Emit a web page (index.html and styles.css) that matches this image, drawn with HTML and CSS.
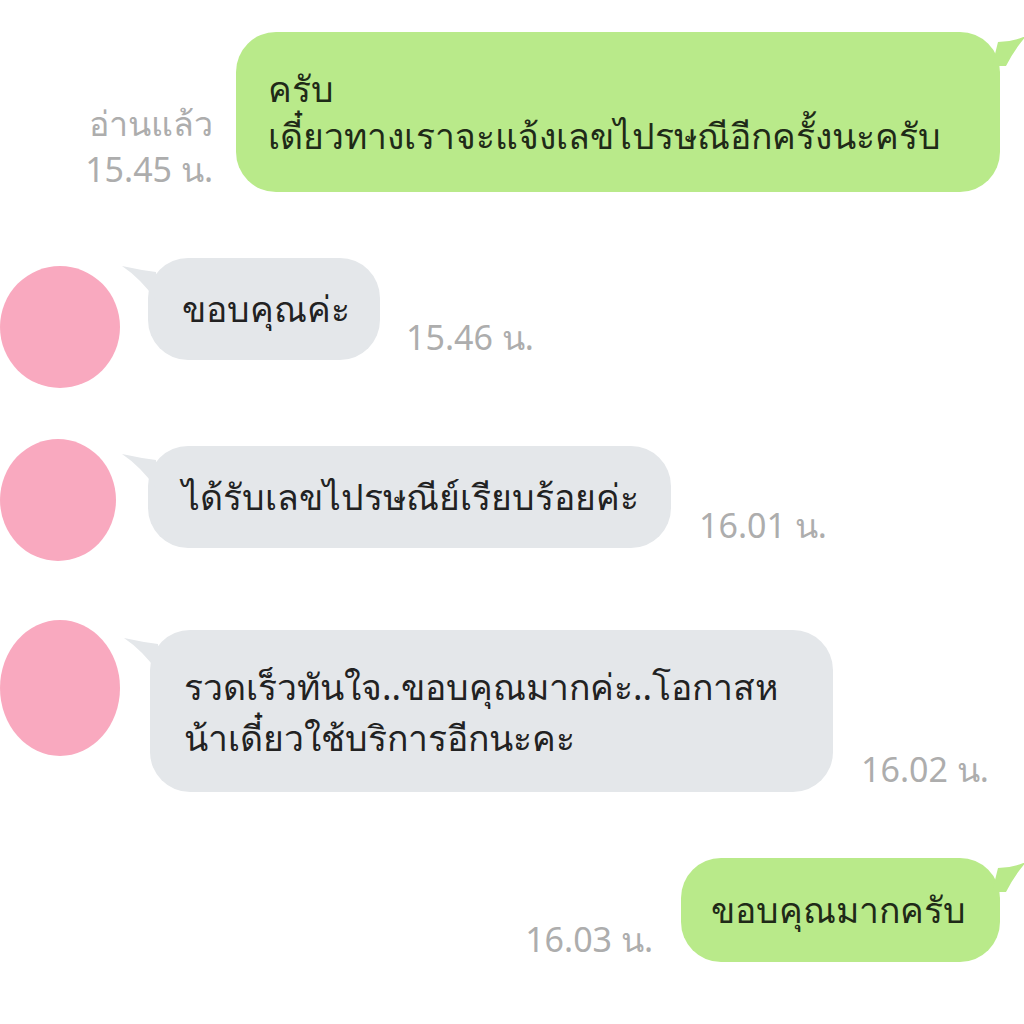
FILE: index.html
```html
<!DOCTYPE html>
<html lang="th">
<head>
    <meta charset="UTF-8">
    <title>แชท</title>
    <link rel="stylesheet" href="styles.css">
</head>
<body>
    <div class="chat">
        <div class="row out first">
            <div class="msg">
                <div class="meta">
                    <span>อ่านแล้ว</span>
                    <span>15.45 น.</span>
                </div>
                <div class="bubble green">ครับ<br>เดี๋ยวทางเราจะแจ้งเลขไปรษณีอีกครั้งนะครับ</div>
            </div>
        </div>

        <div class="row in r2">
            <div class="avatar"></div>
            <div class="msg">
                <div class="bubble gray">ขอบคุณค่ะ</div>
                <div class="meta">15.46 น.</div>
            </div>
        </div>

        <div class="row in r3">
            <div class="avatar"></div>
            <div class="msg">
                <div class="bubble gray">ได้รับเลขไปรษณีย์เรียบร้อยค่ะ</div>
                <div class="meta">16.01 น.</div>
            </div>
        </div>

        <div class="row in r4">
            <div class="avatar"></div>
            <div class="msg">
                <div class="bubble gray">รวดเร็วทันใจ..ขอบคุณมากค่ะ..โอกาสห<br>น้าเดี๋ยวใช้บริการอีกนะคะ</div>
                <div class="meta">16.02 น.</div>
            </div>
        </div>

        <div class="row out last">
            <div class="msg">
                <div class="meta">16.03 น.</div>
                <div class="bubble green">ขอบคุณมากครับ</div>
            </div>
        </div>
    </div>
</body>
</html>
```

FILE: styles.css
```css
body {
    margin: 0;
    background: #fff;
    font-family: "Noto Sans", "Liberation Sans", sans-serif;
}

.chat {
    display: flex;
    flex-direction: column;
}

.row {
    display: flex;
    align-items: flex-start;
}

.row.out {
    justify-content: flex-end;
    padding-right: 24px;
}

.msg {
    display: flex;
    align-items: flex-end;
}

.bubble {
    position: relative;
    font-size: 35.5px;
    line-height: 47px;
    color: #1f2a18;
    border-radius: 40px;
    white-space: nowrap;
}

.bubble.green {
    background-color: #b9ea8a;
}

.bubble.gray {
    background-color: #e4e7ea;
    color: #222;
    margin-left: 28px;
    padding: 27px 30px 28px 34px;
}

/* หางของบับเบิล */
.bubble.green::after {
    content: "";
    position: absolute;
    top: 4px;
    right: -26px;
    width: 34px;
    height: 30px;
    background-color: #b9ea8a;
    clip-path: path('M0 30 L6 6 Q20 6 34 0 Q22 14 14 30 Z');
}

.bubble.gray::before {
    content: "";
    position: absolute;
    top: 8px;
    left: -26px;
    width: 34px;
    height: 34px;
    background-color: #e4e7ea;
    clip-path: path('M0 0 Q18 4 34 6 L34 34 Q18 12 0 0 Z');
}

.meta {
    display: flex;
    flex-direction: column;
    align-items: flex-end;
    font-size: 34px;
    line-height: 46px;
    color: #adadad;
}

.avatar {
    width: 120px;
    height: 122px;
    border-radius: 50%;
    background-color: #f9a9bf;
    flex-shrink: 0;
}

.row.in .meta {
    margin-left: 26px;
}

.row.first {
    margin-top: 32px;
}

.row.first .bubble {
    padding: 33px 59px 33px 32px;
}

.row.first .meta {
    margin-right: 23px;
}

.row.r2 {
    margin-top: 66px;
}

.row.r2 .avatar {
    margin-top: 8px;
}

.row.r3 {
    margin-top: 51px;
}

.row.r3 .avatar {
    width: 116px;
}

.row.r3 .msg {
    margin-top: 7px;
}

.row.r3 .bubble {
    margin-left: 32px;
    padding-right: 32px;
}

.row.r3 .meta {
    margin-left: 28px;
}

.row.r4 {
    margin-top: 59px;
}

.row.r4 .avatar {
    height: 136px;
}

.row.r4 .msg {
    margin-top: 10px;
}

.row.r4 .bubble {
    margin-left: 30px;
    padding: 31px 55px 29px 34px;
    line-height: 51px;
}

.row.r4 .meta {
    margin-left: 28px;
}

.row.last {
    margin-top: 66px;
}

.row.last .bubble {
    padding: 28px 34px 29px 30px;
}

.row.last .meta {
    margin-right: 28px;
}
```
